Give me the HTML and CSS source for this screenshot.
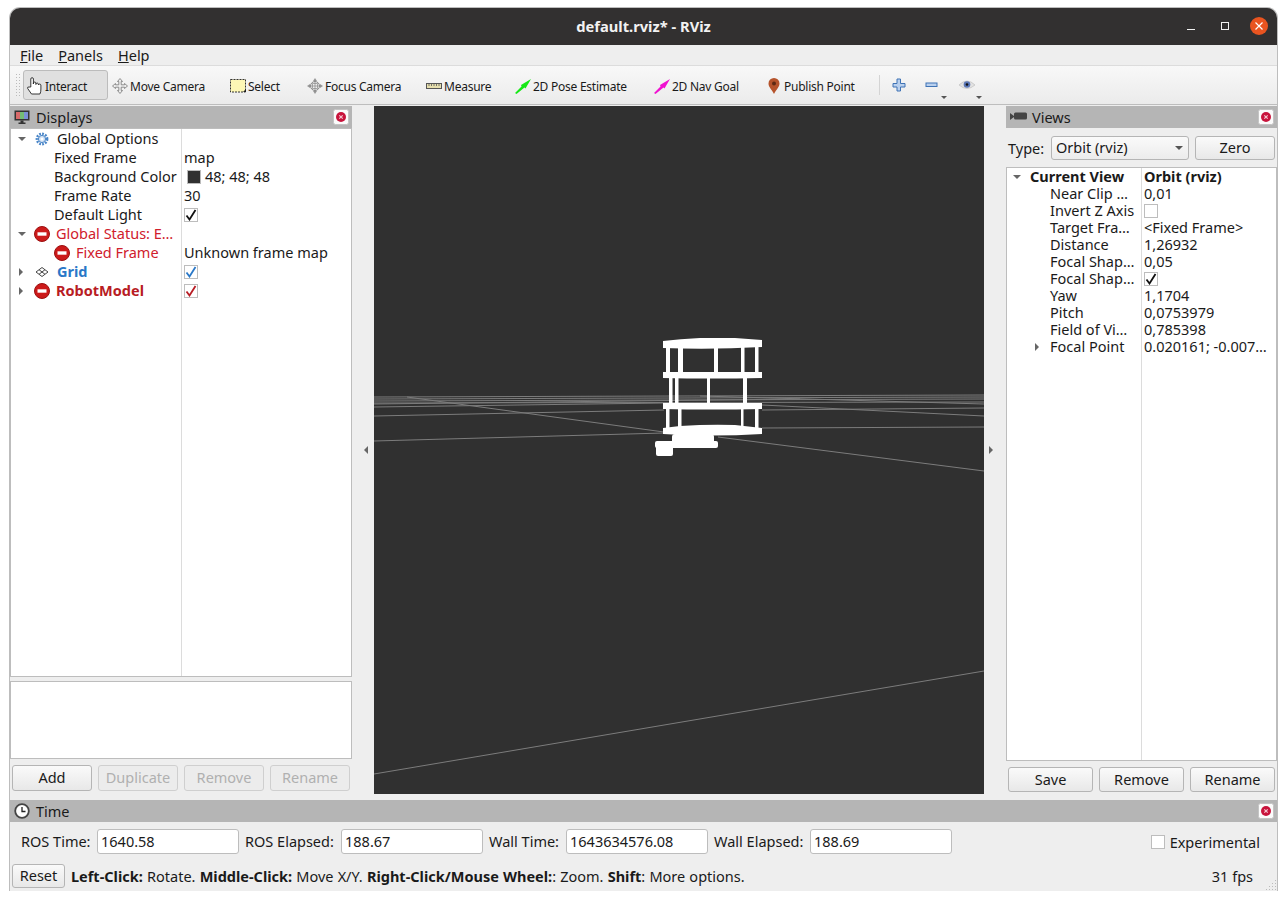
FILE: index.html
```html
<!DOCTYPE html>
<html lang="en">
<head>
    <meta charset="UTF-8">
    <title>default.rviz* - RViz</title>
    <link rel="stylesheet" href="styles.css">
</head>
<body>
    <!-- Shared icons -->
    <svg class="defs" width="0" height="0">
        <symbol id="i-error" viewBox="0 0 16 16">
            <circle cx="8" cy="8" r="7.5" fill="#cc1a1a" stroke="#9c1010"/>
            <rect x="3.5" y="6.3" width="9" height="3.4" fill="#fff"/>
        </symbol>
        <symbol id="i-close" viewBox="0 0 16 16">
            <rect x="0.5" y="0.5" width="15" height="15" rx="2" fill="#fbfbfb" stroke="#c4c4c4"/>
            <circle cx="8" cy="8" r="5" fill="#c8143c"/>
            <path d="M6.3 6.3l3.4 3.4M9.7 6.3l-3.4 3.4" stroke="#f5c6d0" stroke-width="1.2"/>
        </symbol>
        <symbol id="i-check" viewBox="0 0 12 12">
            <path d="M1.500 6.500L4.500 10.500 10.500 1" fill="none" stroke="currentColor" stroke-width="1.800"/>
        </symbol>
    </svg>

    <div class="window">
        <header class="titlebar">
            <span class="title">default.rviz* - RViz</span>
            <div class="wm-buttons">
                <svg class="wm-min" width="10" height="10" viewBox="0 0 10 10"><path d="M0 8.5h8" stroke="#f2f2f2" stroke-width="1"/></svg>
                <svg class="wm-max" width="10" height="10" viewBox="0 0 10 10"><rect x="1.5" y="1.5" width="7" height="7" fill="none" stroke="#f2f2f2"/></svg>
                <svg class="wm-x" width="18" height="18" viewBox="0 0 18 18"><circle cx="9" cy="9" r="9" fill="#e95420"/><path d="M5.5 5.5l7 7M12.5 5.5l-7 7" stroke="#fff" stroke-width="1.2"/></svg>
            </div>
        </header>

        <nav class="menubar">
            <span><u>F</u>ile</span>
            <span><u>P</u>anels</span>
            <span><u>H</u>elp</span>
        </nav>

        <div class="toolbar">
            <span class="grip"></span>
            <div class="tool tool-interact active">
                <svg width="16" height="18" viewBox="0 0 16 18"><path d="M3.800 10V2a1.300 1.300 0 0 1 2.600 0v5V6a1.300 1.300 0 0 1 2.500 0v1.500V7a1.300 1.300 0 0 1 2.500 0v1V8a1.300 1.300 0 0 1 2.500 0v4q.1 3-1 5H4.500L.7 11.500q-.5-1.800 1.200-1.500z" fill="#fff" stroke="#222" stroke-width="0.9"/></svg>
                Interact
            </div>
            <div class="tool tool-move">
                <svg width="16" height="16" viewBox="0 0 16 16"><path d="M8 .5l2.500 3H9.200v3.300h3.300V5.500l3 2.500-3 2.500V9.200H9.200v3.300h1.300L8 15.500l-2.500-3h1.300V9.200H3.500v1.300L.5 8l3-2.500v1.300h3.300V3.500H5.500z" fill="#eee" stroke="#777" stroke-width="0.8"/></svg>
                Move Camera
            </div>
            <div class="tool tool-select">
                <svg width="16" height="16" viewBox="0 0 16 16"><rect x="0.5" y="1.500" width="15" height="12.500" fill="#fdf7b5" stroke="#333" stroke-dasharray="2 1"/><path d="M13 14h3v-3z" fill="#222"/></svg>
                Select
            </div>
            <div class="tool tool-focus">
                <svg width="16" height="16" viewBox="0 0 16 16"><path d="M8 0l2 3H6zM8 16l-2-3h4zM0 8l3-2v4zM16 8l-3 2V6z" fill="#999"/><circle cx="8" cy="8" r="4.500" fill="#eee" stroke="#888"/><path d="M8 2v12M2 8h12M5.500 5.500v5M10.500 5.500v5M5.500 5.500h5M5.500 10.500h5" stroke="#888" stroke-width="0.7"/></svg>
                Focus Camera
            </div>
            <div class="tool tool-measure">
                <svg width="16" height="16" viewBox="0 0 16 16"><rect x="0.500" y="5.500" width="15" height="5" fill="#e6dfae" stroke="#555"/><path d="M3 6v2M5.500 6v2M8 6v2M10.500 6v2M13 6v2" stroke="#555" stroke-width="0.8"/></svg>
                Measure
            </div>
            <div class="tool tool-pose">
                <svg width="16" height="16" viewBox="0 0 16 16"><path d="M0 15L6.500 8.500 6 7 16 1 10.500 10.500 9.500 9.500 1.500 16z" fill="#16e816"/></svg>
                2D Pose Estimate
            </div>
            <div class="tool tool-nav">
                <svg width="16" height="16" viewBox="0 0 16 16"><path d="M0 15L6.500 8.500 6 7 16 1 10.500 10.500 9.500 9.500 1.500 16z" fill="#f012d0"/></svg>
                2D Nav Goal
            </div>
            <div class="tool tool-publish">
                <svg width="16" height="16" viewBox="0 0 16 16"><path d="M8 16C5.500 11 2.500 9 2.500 5.500a5.500 5.500 0 0 1 11 0C13.500 9 10.500 11 8 16z" fill="#b5532b"/><circle cx="8" cy="5.500" r="2" fill="#5e2a14"/></svg>
                Publish Point
            </div>
            <span class="tool-sep"></span>
            <svg class="tb-plus" width="14" height="14" viewBox="0 0 14 14"><path d="M5 1h3.500v4.500H13V9H8.500v4H5V9H1V5.500h4z" fill="#b9d0ee" stroke="#3f73b5"/></svg>
            <svg class="tb-minus" width="14" height="14" viewBox="0 0 14 14"><rect x="1" y="5" width="11" height="3.500" fill="#b9d0ee" stroke="#3f73b5"/></svg>
            <i class="tb-arrow arrow-minus"></i>
            <svg class="tb-eye" width="16" height="12" viewBox="0 0 16 12"><path d="M0 6q8-8 16 0-8 7-16 0z" fill="#e2e2e2" stroke="#bbb" stroke-width="0.6"/><circle cx="8" cy="5.500" r="3.300" fill="#5a76b5"/><circle cx="8" cy="5.500" r="1.300" fill="#111"/></svg>
            <i class="tb-arrow arrow-eye"></i>
        </div>

        <main class="workspace">
            <!-- Displays panel -->
            <section class="dock dock-left">
                <div class="dock-title">
                    <svg width="16" height="16" viewBox="0 0 16 16"><rect x="0.500" y="1.500" width="15" height="10" fill="#333"/><rect x="2" y="3" width="4" height="7" fill="#d86a6a"/><rect x="6" y="3" width="4" height="7" fill="#74bc74"/><rect x="10" y="3" width="4" height="7" fill="#7a8fd6"/><path d="M6.500 11.500h3v2h2v1.500h-7v-1.500h2z" fill="#333"/></svg>
                    <span>Displays</span>
                    <svg class="close" width="16" height="16"><use href="#i-close"/></svg>
                </div>
                <div class="tree tree-displays">
                    <div class="row">
                        <div class="name"><i class="exp open"></i>
                            <svg class="row-icon" width="14" height="14" viewBox="0 0 14 14"><circle cx="7" cy="7" r="5.200" fill="none" stroke="#4a86c8" stroke-width="2.400" stroke-dasharray="1.800 1.200"/><circle cx="7" cy="7" r="3.600" fill="#cfe0f4" stroke="#4a86c8"/><circle cx="7" cy="7" r="1.500" fill="#fff"/></svg>
                            <span class="after-icon">Global Options</span></div>
                        <div class="value"></div>
                    </div>
                    <div class="row"><div class="name lvl1">Fixed Frame</div><div class="value">map</div></div>
                    <div class="row"><div class="name lvl1">Background Color</div><div class="value"><i class="swatch"></i>48; 48; 48</div></div>
                    <div class="row"><div class="name lvl1">Frame Rate</div><div class="value">30</div></div>
                    <div class="row"><div class="name lvl1">Default Light</div><div class="value"><span class="check"><svg width="12" height="12"><use href="#i-check"/></svg></span></div></div>
                    <div class="row err">
                        <div class="name"><i class="exp open"></i><svg class="row-icon err-icon" width="16" height="16"><use href="#i-error"/></svg><span class="after-err">Global Status: E&hellip;</span></div>
                        <div class="value"></div>
                    </div>
                    <div class="row">
                        <div class="name lvl2 err"><svg class="row-icon" width="16" height="16"><use href="#i-error"/></svg><span class="after-nested">Fixed Frame</span></div>
                        <div class="value">Unknown frame map</div>
                    </div>
                    <div class="row">
                        <div class="name grid-name"><i class="exp closed"></i>
                            <svg class="row-icon" width="14" height="14" viewBox="0 0 14 14"><path d="M7 2.500L13 7 7 11.500 1 7zM4 4.700L10 9.300M10 4.700L4 9.300" fill="none" stroke="#444"/></svg>
                            <span class="after-icon">Grid</span></div>
                        <div class="value"><span class="check check-blue"><svg width="12" height="12"><use href="#i-check"/></svg></span></div>
                    </div>
                    <div class="row">
                        <div class="name robot-name"><i class="exp closed"></i><svg class="row-icon err-icon" width="16" height="16"><use href="#i-error"/></svg><span class="after-err">RobotModel</span></div>
                        <div class="value"><span class="check check-red"><svg width="12" height="12"><use href="#i-check"/></svg></span></div>
                    </div>
                </div>
                <div class="h-grip"><i class="dots"></i></div>
                <div class="details"></div>
                <div class="dock-buttons four">
                    <button>Add</button>
                    <button disabled>Duplicate</button>
                    <button disabled>Remove</button>
                    <button disabled>Rename</button>
                </div>
            </section>

            <div class="splitter split-l"><i class="split-arrow left"></i></div>

            <!-- 3D view -->
            <div class="viewport">
                <svg class="scene" viewBox="374 106 610 688">
                    <g class="grid-lines">
                        <path d="M374 397L984 395M374 399L984 397M374 401L984 399M374 403L984 402M374 404L800 399M700 396L984 404"/>
                        <path d="M374 407L664 403M374 416L664 410M374 441L664 433M762 428L984 427M762 405L984 416M762 410L984 408"/>
                        <path d="M407 397L664 432M718 437L984 471M374 774L984 671"/>
                    </g>
                    <g class="robot">
                        <path d="M663 341Q680 339 700 338H735L762 340V347Q710 350 663 348z"/>
                        <path d="M663 372H762V378Q710 379 663 378zM663 403H762V409Q710 410 663 409z"/>
                        <path d="M663 428L680 426Q710 424 735 425L762 428V434Q710 437 663 434z"/>
                        <path d="M666 347h4v26h-4zM678 347h5v26h-5zM714 347h4v26h-4zM741 347h3.500v26h-3.500zM755 347h3.500v26h-3.500z"/>
                        <path d="M669 378h3.500v26h-3.500zM675 378h3.500v26h-3.500zM707 378h3v26h-3zM743 378h4v26h-4z"/>
                        <path d="M666 409h3.500v19h-3.500zM678 409h3.500v19h-3.500zM741 409h2.500v19h-2.500zM755 409h3.500v19h-3.500z"/>
                        <rect x="672" y="434" width="42" height="12" rx="3"/>
                        <rect x="655" y="441" width="63" height="7" rx="2"/>
                        <rect x="656" y="445" width="17" height="11" rx="2"/>
                    </g>
                </svg>
            </div>

            <div class="splitter split-r"><i class="split-arrow right"></i></div>

            <!-- Views panel -->
            <section class="dock dock-right">
                <div class="dock-title">
                    <svg width="18" height="16" viewBox="0 0 18 16"><path d="M0 4l4 3V5h0a1.500 1.500 0 0 1 1.500-1.500h10A1.500 1.500 0 0 1 17 5v4a1.500 1.500 0 0 1-1.500 1.500h-10A1.500 1.500 0 0 1 4 9V8l-4 3z" fill="#444"/></svg>
                    <span class="views-label">Views</span>
                    <svg class="close" width="16" height="16"><use href="#i-close"/></svg>
                </div>
                <div class="type-row">
                    <span class="type-label">Type:</span>
                    <div class="select">Orbit (rviz)<i class="select-arrow"></i></div>
                    <button class="zero">Zero</button>
                </div>
                <div class="tree tree-views">
                    <div class="vrow head"><div class="name"><i class="exp open"></i>Current View</div><div class="value">Orbit (rviz)</div></div>
                    <div class="vrow"><div class="name">Near Clip &hellip;</div><div class="value">0,01</div></div>
                    <div class="vrow"><div class="name">Invert Z Axis</div><div class="value"><span class="check"></span></div></div>
                    <div class="vrow"><div class="name">Target Fra&hellip;</div><div class="value">&lt;Fixed Frame&gt;</div></div>
                    <div class="vrow"><div class="name">Distance</div><div class="value">1,26932</div></div>
                    <div class="vrow"><div class="name">Focal Shap&hellip;</div><div class="value">0,05</div></div>
                    <div class="vrow"><div class="name">Focal Shap&hellip;</div><div class="value"><span class="check"><svg width="12" height="12"><use href="#i-check"/></svg></span></div></div>
                    <div class="vrow"><div class="name">Yaw</div><div class="value">1,1704</div></div>
                    <div class="vrow"><div class="name">Pitch</div><div class="value">0,0753979</div></div>
                    <div class="vrow"><div class="name">Field of Vi&hellip;</div><div class="value">0,785398</div></div>
                    <div class="vrow"><div class="name"><i class="exp closed"></i>Focal Point</div><div class="value">0.020161; -0.007&hellip;</div></div>
                </div>
                <div class="dock-buttons three">
                    <button>Save</button>
                    <button>Remove</button>
                    <button>Rename</button>
                </div>
            </section>
        </main>

        <div class="v-grip"><i class="dots"></i></div>

        <!-- Time panel -->
        <section class="time-panel">
            <div class="dock-title">
                <svg width="16" height="16" viewBox="0 0 16 16"><circle cx="8" cy="8" r="6.800" fill="#fff" stroke="#444" stroke-width="1.800"/><path d="M8 4v4.500h3.500" fill="none" stroke="#222" stroke-width="1.300"/></svg>
                <span>Time</span>
                <svg class="close" width="16" height="16"><use href="#i-close"/></svg>
            </div>
            <div class="time-fields">
                <label>ROS Time:</label><input value="1640.58">
                <label>ROS Elapsed:</label><input value="188.67">
                <label>Wall Time:</label><input value="1643634576.08">
                <label>Wall Elapsed:</label><input value="188.69">
                <div class="experimental"><span class="check"></span>Experimental</div>
            </div>
            <div class="status-row">
                <button class="reset">Reset</button>
                <p class="hints"><b>Left-Click:</b> Rotate. <b>Middle-Click:</b> Move X/Y. <b>Right-Click/Mouse Wheel:</b>: Zoom. <b>Shift</b>: More options.</p>
                <span class="fps">31 fps</span>
            </div>
        </section>
        <i class="size-grip"></i>
    </div>
</body>
</html>
```

FILE: styles.css
```css
* {
    box-sizing: border-box;
}
body {
    margin: 0;
    padding: 8px 0 0 10px;
    background-color: #fff;
    font-family: "Noto Sans", sans-serif;
    font-size: 14.5px;
    color: #1a1a1a;
}
.defs {
    display: block;
}
.window {
    width: 1267px;
    height: 883px;
    background-color: #eee;
    border-radius: 10px 10px 0 0;
    box-shadow: 0 0 0 1px #bdbdbd;
    display: flex;
    flex-direction: column;
    position: relative;
}
.size-grip {
    position: absolute;
    right: 1px;
    bottom: 1px;
    width: 11px;
    height: 11px;
    background-image: radial-gradient(#bbb 0.7px, transparent 0.7px);
    background-size: 3px 3px;
    clip-path: polygon(100% 0, 100% 100%, 0 100%);
}

/* Title bar */
.titlebar {
    height: 37px;
    flex: none;
    background-color: #323030;
    border-radius: 10px 10px 0 0;
    display: flex;
    align-items: center;
    justify-content: center;
    position: relative;
    padding-bottom: 2px;
}
.title {
    color: #f2f2f2;
    font-weight: 700;
    font-size: 14.700px;
}
.wm-buttons {
    position: absolute;
    right: 9px;
    top: 9px;
    display: flex;
    align-items: center;
}
.wm-min {
    margin-right: 23px;
}
.wm-max {
    margin-right: 20px;
}

/* Menu */
.menubar {
    height: 21px;
    flex: none;
    background-color: #eee;
    border-bottom: 1px solid #dcdcdc;
    display: flex;
    gap: 15px;
    padding-left: 10px;
    line-height: 21px;
}

/* Toolbar */
.toolbar {
    height: 39px;
    flex: none;
    background: linear-gradient(#f8f8f8, #ebebeb);
    border-bottom: 1px solid #bdbdbd;
    display: flex;
    align-items: center;
    font-size: 12px;
    letter-spacing: -0.25px;
    margin-bottom: 1px;
}
.grip {
    width: 6px;
    height: 24px;
    margin: 0 2px 0 5px;
    background-image: radial-gradient(#bbb 1px, transparent 1px);
    background-size: 3px 3px;
}
.tool {
    height: 30px;
    padding: 2px 0 0 3px;
    display: flex;
    align-items: center;
    gap: 2px;
    flex: none;
    border: 1px solid transparent;
    white-space: nowrap;
}
.tool.active {
    background-color: #e0e0e0;
    border-color: #bcbcbc;
    border-radius: 3px;
}
.tool-interact { width: 85px; }
.tool-move { width: 118px; }
.tool-select { width: 77px; }
.tool-focus { width: 119px; }
.tool-measure { width: 89px; }
.tool-pose { width: 139px; }
.tool-nav { width: 112px; }
.tool-publish { width: 117px; }
.tool-sep {
    width: 1px;
    height: 20px;
    background-color: #d4d4d4;
}
.tb-plus {
    margin-left: 12px;
}
.tb-minus {
    margin-left: 19px;
}
.tb-arrow {
    width: 0;
    height: 0;
    border-left: 3px solid transparent;
    border-right: 3px solid transparent;
    border-top: 3px solid #555;
    align-self: flex-end;
    margin-bottom: 5px;
}
.arrow-minus {
    margin-left: 2px;
}
.tb-eye {
    margin-left: 12px;
}
.arrow-eye {
    margin-left: 1px;
}

/* Docks */
.workspace {
    height: 688px;
    flex: none;
    display: flex;
}
.dock {
    display: flex;
    flex-direction: column;
    flex: none;
}
.dock-left {
    width: 342px;
}
.dock-right {
    width: 271px;
}
.dock-title {
    height: 22px;
    flex: none;
    background-color: #b5b5b5;
    display: flex;
    align-items: center;
    gap: 6px;
    padding: 0 3px 0 4px;
}
.dock-title .close {
    margin-left: auto;
}
.views-label {
    margin-left: -2px;
}
.splitter {
    width: 22px;
    flex: none;
    display: flex;
    align-items: center;
}
.split-l {
    justify-content: flex-end;
    padding-right: 6px;
}
.split-r {
    padding-left: 5px;
}
.split-arrow {
    width: 0;
    height: 0;
    border-top: 4px solid transparent;
    border-bottom: 4px solid transparent;
}
.split-arrow.left {
    border-right: 4px solid #666;
}
.split-arrow.right {
    border-left: 4px solid #666;
}
.viewport {
    width: 610px;
    flex: none;
    background-color: #303030;
}
.scene {
    display: block;
    width: 100%;
    height: 100%;
}
.grid-lines path {
    fill: none;
    stroke: #7c7c7c;
    stroke-width: 1;
}
.robot path, .robot rect {
    fill: #fff;
}

/* Trees */
.tree {
    background-color: #fff;
    border: 1px solid #bdbdbd;
    flex: none;
}
.tree-displays {
    height: 549px;
    background-image: linear-gradient(#dcdcdc, #dcdcdc);
    background-size: 1px 100%;
    background-position: 170px 0;
    background-repeat: no-repeat;
}
.tree-views {
    height: 594px;
    background-image: linear-gradient(#dcdcdc, #dcdcdc);
    background-size: 1px 100%;
    background-position: 134px 0;
    background-repeat: no-repeat;
}
.row {
    height: 19px;
    display: grid;
    grid-template-columns: 170px 1fr;
    line-height: 19px;
    white-space: nowrap;
}
.row .name {
    display: flex;
    align-items: center;
    position: relative;
    padding-left: 7px;
}
.row .value {
    padding-left: 3px;
    display: flex;
    align-items: center;
}
.row .lvl1 {
    padding-left: 43px;
}
.row .lvl2 {
    padding-left: 43px;
}
.exp {
    width: 0;
    height: 0;
    flex: none;
    display: inline-block;
}
.exp.open {
    border-left: 4px solid transparent;
    border-right: 4px solid transparent;
    border-top: 4px solid #666;
}
.exp.closed {
    border-top: 4px solid transparent;
    border-bottom: 4px solid transparent;
    border-left: 4px solid #666;
    margin: 0 3px 0 1px;
}
.row-icon {
    flex: none;
    margin-left: 9px;
}
.err-icon {
    margin-left: 8px;
}
.lvl2 .row-icon {
    margin-left: 0;
}
.after-icon {
    margin-left: 8px;
}
.after-err {
    margin-left: 6px;
}
.after-nested {
    margin-left: 6px;
}
.err {
    color: #d0202c;
}
.row.err .value {
    color: #1a1a1a;
}
.grid-name {
    color: #2a78c8;
    font-weight: 700;
}
.robot-name {
    color: #b81c24;
    font-weight: 700;
}
.swatch {
    width: 14px;
    height: 14px;
    background-color: #303030;
    border: 1px solid #bbb;
    margin: 0 4px 0 3px;
}
.check {
    width: 14px;
    height: 14px;
    border: 1px solid #bdbdbd;
    background-color: #fff;
    display: inline-flex;
    align-items: center;
    justify-content: center;
    color: #111;
}
.check-blue {
    color: #2a78c8;
}
.check-red {
    color: #b81c24;
}
.vrow {
    height: 17px;
    display: grid;
    grid-template-columns: 134px 1fr;
    line-height: 17px;
    white-space: nowrap;
}
.vrow .name {
    padding-left: 43px;
    position: relative;
    display: flex;
    align-items: center;
}
.vrow .value {
    padding-left: 3px;
    display: flex;
    align-items: center;
}
.vrow.head {
    font-weight: 700;
}
.vrow.head .name {
    padding-left: 6px;
}
.vrow.head .exp {
    margin-right: 9px;
}
.vrow .exp.closed {
    position: absolute;
    left: 28px;
    top: 5px;
    margin: 0;
}

.h-grip {
    height: 4px;
    flex: none;
    display: flex;
    justify-content: center;
}
.v-grip {
    height: 6px;
    flex: none;
    display: flex;
    justify-content: center;
    align-items: center;
}
.dots {
    width: 18px;
    height: 2px;
    background-image: radial-gradient(#bdbdbd 0.7px, transparent 0.7px);
    background-size: 3px 2px;
}
.details {
    height: 78px;
    flex: none;
    background-color: #fff;
    border: 1px solid #bdbdbd;
}

/* Buttons */
button {
    font-family: inherit;
    font-size: 14.5px;
    color: #1a1a1a;
    background: linear-gradient(#fafafa, #e8e8e8);
    border: 1px solid #b5b5b5;
    border-radius: 3px;
    padding: 0 0 2px;
}
button:disabled {
    color: #b0b0b0;
    border-color: #cfcfcf;
    background: #ececec;
}
.dock-buttons {
    display: flex;
    flex: none;
}
.dock-buttons.four {
    gap: 6px;
    margin-top: 6px;
    padding-left: 2px;
}
.dock-buttons.four button {
    width: 80px;
    height: 26px;
}
.dock-buttons.three {
    gap: 6px;
    margin-top: 6px;
    padding-left: 2px;
}
.dock-buttons.three button {
    width: 85px;
    height: 25px;
}
.type-row {
    height: 39px;
    flex: none;
    display: flex;
    align-items: center;
    padding-left: 2px;
}
.type-label {
    width: 43px;
}
.select {
    width: 138px;
    height: 24px;
    background: linear-gradient(#fafafa, #ececec);
    border: 1px solid #b5b5b5;
    border-radius: 3px;
    padding: 0 0 2px 4px;
    line-height: 20px;
    display: flex;
    align-items: center;
}
.select-arrow {
    margin-left: auto;
    margin-right: 5px;
    margin-top: 2px;
    width: 0;
    height: 0;
    border-left: 4px solid transparent;
    border-right: 4px solid transparent;
    border-top: 4px solid #555;
}
.zero {
    width: 80px;
    height: 24px;
    margin-left: 6px;
}

/* Time panel */
.time-panel {
    flex: 1;
    display: flex;
    flex-direction: column;
}
.time-fields {
    display: grid;
    grid-template-columns: 76px 148px 96px 148px 77px 148px 96px 148px 1fr;
    align-items: center;
    padding-left: 11px;
    margin-top: 7px;
    height: 25px;
}
.time-fields label {
    margin-top: -1px;
}
.time-fields input {
    width: 142px;
    height: 25px;
    border: 1px solid #bdbdbd;
    border-radius: 3px;
    background-color: #fff;
    font-family: inherit;
    font-size: 14.5px;
    color: #1a1a1a;
    padding: 0 3px 2px;
}
.experimental {
    justify-self: end;
    display: flex;
    align-items: center;
    gap: 5px;
    padding-right: 17px;
}
.status-row {
    display: flex;
    align-items: center;
    padding: 0 24px 0 2px;
    margin-top: 10px;
    height: 24px;
}
.reset {
    width: 53px;
    height: 24px;
}
.hints {
    margin: 0 0 0 6px;
    word-spacing: 0.4px;
}
.fps {
    margin-left: auto;
}
```
